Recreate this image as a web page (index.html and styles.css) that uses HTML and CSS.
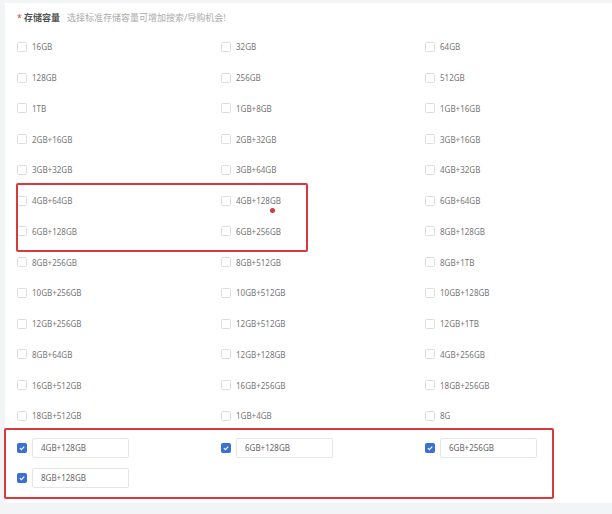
FILE: index.html
```html
<!DOCTYPE html>
<html lang="zh-CN">
<head>
<meta charset="utf-8">
<title>存储容量</title>
<link rel="stylesheet" href="styles.css">
</head>
<body>
<div class="page">
  <div class="card">
    <div class="header">
      <span class="req">*</span><span class="label">存储容量</span><span class="hint">选择标准存储容量可增加搜索/导购机会!</span>
    </div>
    <div class="options">
      <label class="opt"><span class="cb"></span><span class="txt">16GB</span></label>
      <label class="opt"><span class="cb"></span><span class="txt">32GB</span></label>
      <label class="opt"><span class="cb"></span><span class="txt">64GB</span></label>
      <label class="opt"><span class="cb"></span><span class="txt">128GB</span></label>
      <label class="opt"><span class="cb"></span><span class="txt">256GB</span></label>
      <label class="opt"><span class="cb"></span><span class="txt">512GB</span></label>
      <label class="opt"><span class="cb"></span><span class="txt">1TB</span></label>
      <label class="opt"><span class="cb"></span><span class="txt">1GB+8GB</span></label>
      <label class="opt"><span class="cb"></span><span class="txt">1GB+16GB</span></label>
      <label class="opt"><span class="cb"></span><span class="txt">2GB+16GB</span></label>
      <label class="opt"><span class="cb"></span><span class="txt">2GB+32GB</span></label>
      <label class="opt"><span class="cb"></span><span class="txt">3GB+16GB</span></label>
      <label class="opt"><span class="cb"></span><span class="txt">3GB+32GB</span></label>
      <label class="opt"><span class="cb"></span><span class="txt">3GB+64GB</span></label>
      <label class="opt"><span class="cb"></span><span class="txt">4GB+32GB</span></label>
      <label class="opt"><span class="cb"></span><span class="txt">4GB+64GB</span></label>
      <label class="opt"><span class="cb"></span><span class="txt">4GB+128GB</span></label>
      <label class="opt"><span class="cb"></span><span class="txt">6GB+64GB</span></label>
      <label class="opt"><span class="cb"></span><span class="txt">6GB+128GB</span></label>
      <label class="opt"><span class="cb"></span><span class="txt">6GB+256GB</span></label>
      <label class="opt"><span class="cb"></span><span class="txt">8GB+128GB</span></label>
      <label class="opt"><span class="cb"></span><span class="txt">8GB+256GB</span></label>
      <label class="opt"><span class="cb"></span><span class="txt">8GB+512GB</span></label>
      <label class="opt"><span class="cb"></span><span class="txt">8GB+1TB</span></label>
      <label class="opt"><span class="cb"></span><span class="txt">10GB+256GB</span></label>
      <label class="opt"><span class="cb"></span><span class="txt">10GB+512GB</span></label>
      <label class="opt"><span class="cb"></span><span class="txt">10GB+128GB</span></label>
      <label class="opt"><span class="cb"></span><span class="txt">12GB+256GB</span></label>
      <label class="opt"><span class="cb"></span><span class="txt">12GB+512GB</span></label>
      <label class="opt"><span class="cb"></span><span class="txt">12GB+1TB</span></label>
      <label class="opt"><span class="cb"></span><span class="txt">8GB+64GB</span></label>
      <label class="opt"><span class="cb"></span><span class="txt">12GB+128GB</span></label>
      <label class="opt"><span class="cb"></span><span class="txt">4GB+256GB</span></label>
      <label class="opt"><span class="cb"></span><span class="txt">16GB+512GB</span></label>
      <label class="opt"><span class="cb"></span><span class="txt">16GB+256GB</span></label>
      <label class="opt"><span class="cb"></span><span class="txt">18GB+256GB</span></label>
      <label class="opt"><span class="cb"></span><span class="txt">18GB+512GB</span></label>
      <label class="opt"><span class="cb"></span><span class="txt">1GB+4GB</span></label>
      <label class="opt"><span class="cb"></span><span class="txt">8G</span></label>
    </div>
    <div class="checked">
      <div class="copt"><span class="cb on"><svg viewBox="0 0 10 10"><path d="M2.3 5.2 L4.2 7 L7.8 3.2" fill="none" stroke="#fff" stroke-width="1.4"/></svg></span><span class="inp">4GB+128GB</span></div>
      <div class="copt"><span class="cb on"><svg viewBox="0 0 10 10"><path d="M2.3 5.2 L4.2 7 L7.8 3.2" fill="none" stroke="#fff" stroke-width="1.4"/></svg></span><span class="inp">6GB+128GB</span></div>
      <div class="copt"><span class="cb on"><svg viewBox="0 0 10 10"><path d="M2.3 5.2 L4.2 7 L7.8 3.2" fill="none" stroke="#fff" stroke-width="1.4"/></svg></span><span class="inp">6GB+256GB</span></div>
      <div class="copt"><span class="cb on"><svg viewBox="0 0 10 10"><path d="M2.3 5.2 L4.2 7 L7.8 3.2" fill="none" stroke="#fff" stroke-width="1.4"/></svg></span><span class="inp">8GB+128GB</span></div>
    </div>
  </div>
  <div class="mark mark1"></div>
  <div class="dot"></div>
  <div class="mark mark2"></div>
</div>
</body>
</html>
```

FILE: styles.css
```css
html, body {
  margin: 0;
  padding: 0;
}
body {
  background: #f3f4f6;
  font-family: "Noto Sans", "Noto Sans CJK SC", sans-serif;
  width: 612px;
  height: 514px;
  overflow: hidden;
}
.page {
  position: relative;
  width: 612px;
  height: 514px;
}
.card {
  position: relative;
  top: 3px;
  margin-left: 5px;
  width: 607px;
  height: 500px;
  background: #ffffff;
  box-sizing: border-box;
  padding: 8px 0 0 12px;
}
.header {
  height: 14px;
  display: flex;
  align-items: center;
  line-height: 14px;
}
.req {
  color: #e0413a;
  margin-right: 2px;
  font-size: 9px;
}
.label {
  color: #555;
  font-weight: 700;
  margin-right: 7px;
  font-size: 9px;
}
.hint {
  color: #ababab;
  font-size: 9px;
}
.options {
  margin-top: 6.6px;
  display: grid;
  grid-template-columns: 204px 204px 190px;
  grid-auto-rows: 30.75px;
}
.opt {
  display: flex;
  align-items: center;
  font-size: 8px;
  color: #777;
}
.cb {
  width: 10px;
  height: 10px;
  box-sizing: border-box;
  border: 1px solid #dedede;
  border-radius: 1.5px;
  background: #fff;
  margin-right: 5px;
  flex: none;
  display: flex;
}
.cb.on {
  background: #3c6ed8;
  border-color: #3c6ed8;
}
.cb svg {
  width: 8px;
  height: 8px;
}
.checked {
  margin-top: 6.6px;
  display: grid;
  grid-template-columns: 204px 204px 190px;
  grid-auto-rows: 20px;
  row-gap: 10px;
}
.copt {
  display: flex;
  align-items: center;
}
.inp {
  width: 97px;
  height: 20px;
  box-sizing: border-box;
  border: 1px solid #e6e6e6;
  border-radius: 2px;
  padding-left: 8px;
  display: flex;
  align-items: center;
  font-size: 8px;
  color: #666;
}
.mark {
  position: absolute;
  box-sizing: border-box;
  border: 2px solid #d9393b;
  border-radius: 2px;
}
.mark1 {
  left: 16px;
  top: 183px;
  width: 292px;
  height: 69px;
}
.mark2 {
  left: 4px;
  top: 428px;
  width: 550px;
  height: 71px;
}
.dot {
  position: absolute;
  left: 270px;
  top: 208px;
  width: 5px;
  height: 5px;
  border-radius: 50%;
  background: #d9393b;
}
```
